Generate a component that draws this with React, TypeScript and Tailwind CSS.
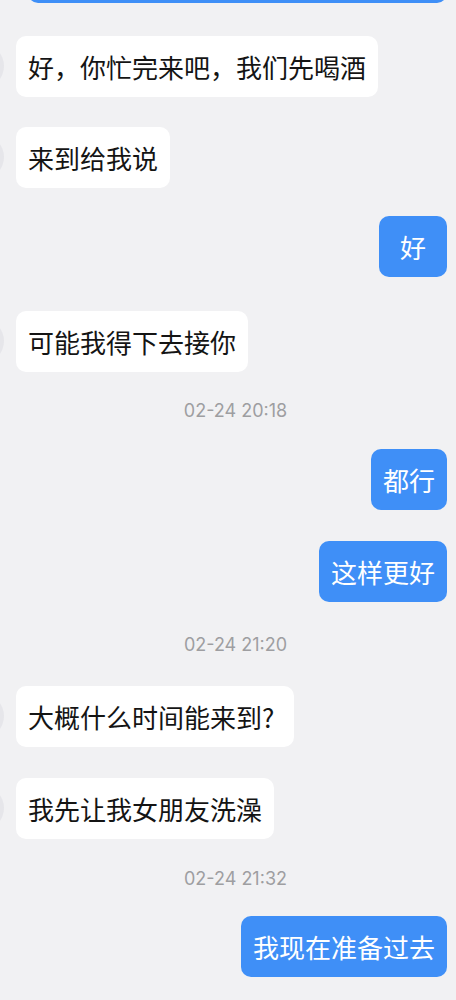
const font = { fontFamily: '"Noto Sans CJK SC", "Noto Sans", sans-serif' }
const timeFont = { fontFamily: 'Inter, "Noto Sans", sans-serif' }

type Item =
  | { kind: "in" | "out"; text: string; mt: string; minW?: string }
  | { kind: "time"; text: string; mt: string }

const items: Item[] = [
  { kind: "in", text: "好，你忙完来吧，我们先喝酒", mt: "mt-[33px]" },
  { kind: "in", text: "来到给我说", mt: "mt-[30px]" },
  { kind: "out", text: "好", mt: "mt-[28px]", minW: "min-w-[68px]" },
  { kind: "in", text: "可能我得下去接你", mt: "mt-[34px]" },
  { kind: "time", text: "02-24 20:18", mt: "mt-[27px]" },
  { kind: "out", text: "都行", mt: "mt-[26px]" },
  { kind: "out", text: "这样更好", mt: "mt-[31px]" },
  { kind: "time", text: "02-24 21:20", mt: "mt-[31px]" },
  { kind: "in", text: "大概什么时间能来到?", mt: "mt-[29px]", minW: "min-w-[278px]" },
  { kind: "in", text: "我先让我女朋友洗澡", mt: "mt-[31px]" },
  { kind: "time", text: "02-24 21:32", mt: "mt-[28px]" },
  { kind: "out", text: "我现在准备过去", mt: "mt-[25px]" },
]

export default function App() {
  return (
    <div className="w-[456px] h-[1000px] overflow-hidden bg-[#f1f1f3]" style={font}>
      <div className="flex flex-col pl-4 pr-[9px]">
        {/* tail of the previous outgoing message */}
        <div className="self-end w-[419px] h-[61px] -mt-[58px] rounded-[10px] bg-[#3f8ff7]" />

        {items.map((item, i) => {
          if (item.kind === "time") {
            return (
              <div
                key={i}
                className={`${item.mt} h-[24px] leading-[24px] text-center text-[18px] text-[#9e9ea1] pl-[8px]`}
                style={timeFont}
              >
                {item.text}
              </div>
            )
          }
          if (item.kind === "out") {
            return (
              <div
                key={i}
                className={`${item.mt} ${item.minW ?? ""} self-end h-[61px] px-3 flex items-center justify-center rounded-[10px] bg-[#3f8ff7] text-white text-[26px] leading-none whitespace-nowrap`}
              >
                {item.text}
              </div>
            )
          }
          return (
            <div key={i} className={`${item.mt} relative self-start`}>
              <div className="absolute -left-[56px] top-[8px] w-[44px] h-[44px] rounded-full bg-[#e6e6ea]" />
              <div
                className={`${item.minW ?? ""} h-[61px] px-3 flex items-center rounded-[10px] bg-white text-[#141414] text-[26px] leading-none whitespace-nowrap`}
              >
                {item.text}
              </div>
            </div>
          )
        })}
      </div>
    </div>
  )
}
